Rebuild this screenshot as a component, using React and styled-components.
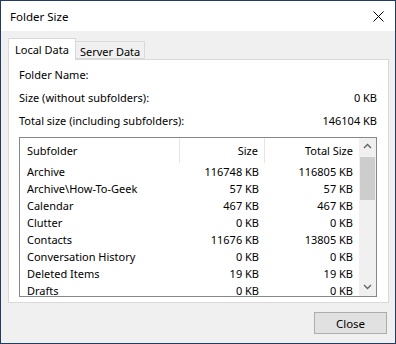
import React from 'react'
import styled, { createGlobalStyle } from 'styled-components'

const GlobalStyle = createGlobalStyle`
  html, body {
    margin: 0;
    padding: 0;
    width: 396px;
    height: 344px;
    overflow: hidden;
    background: #f0f0f0;
  }
  * { box-sizing: border-box; }
`

const Window = styled.div`
  width: 396px;
  height: 344px;
  border: 1px solid #1f3d62;
  background: #f0f0f0;
  display: flex;
  flex-direction: column;
  font-family: "Segoe UI", "Noto Sans", sans-serif;
  font-size: 11px;
  color: #000;
`

const TitleBar = styled.div`
  height: 30px;
  background: #fff;
  display: flex;
  align-items: center;
  justify-content: space-between;
  padding: 0 11px 0 9px;
  font-size: 11.5px;
`

const CloseX = styled.svg`
  width: 11px;
  height: 11px;
`

const Body = styled.div`
  flex: 1;
  display: flex;
  flex-direction: column;
  padding: 7px 6px 0 7px;
`

const TabStrip = styled.div`
  display: flex;
  align-items: flex-end;
  height: 21px;
  position: relative;
  z-index: 1;
`

const Tab = styled.div`
  height: ${p => (p.$active ? '22px' : '18px')};
  margin-bottom: ${p => (p.$active ? '-1px' : '0')};
  padding: 0 ${p => (p.$active ? '6px' : '4px')};
  background: ${p => (p.$active ? '#fff' : '#f0f0f0')};
  border: 1px solid #d9d9d9;
  border-bottom: ${p => (p.$active ? 'none' : '1px solid #d9d9d9')};
  border-left: ${p => (p.$active ? '1px solid #d9d9d9' : 'none')};
  display: flex;
  align-items: center;
  padding-top: ${p => (p.$active ? '0' : '2px')};
  line-height: 1;
`

const Panel = styled.div`
  height: 244px;
  background: #fff;
  border: 1px solid #d9d9d9;
  padding: 3px 11px 0 10px;
  display: flex;
  flex-direction: column;
`

const InfoRow = styled.div`
  display: flex;
  justify-content: space-between;
  height: 23.5px;
  align-items: center;
  &:nth-child(n + 2) {
    margin-top: -0.5px;
  }
`

const ListBox = styled.div`
  margin-top: 4px;
  height: 160px;
  border: 1px solid #828790;
  display: flex;
  overflow: hidden;
`

const Table = styled.div`
  width: 339px;
  display: flex;
  flex-direction: column;
`

const Row = styled.div`
  display: grid;
  grid-template-columns: 160px 85px 94px;
  height: ${p => (p.$header ? '25px' : '17px')};
  flex-shrink: 0;
  align-items: center;
`

const Cell = styled.div`
  height: 100%;
  display: flex;
  align-items: center;
  justify-content: ${p => (p.$right ? 'flex-end' : 'flex-start')};
  padding: ${p => (p.$right ? '0 6px 0 0' : '0 0 0 7px')};
  border-right: ${p => (p.$sep ? '1px solid #e5e5e5' : 'none')};
  white-space: nowrap;
`

const ScrollBar = styled.div`
  width: 17px;
  background: #f0f0f0;
  display: flex;
  flex-direction: column;
`

const ArrowButton = styled.div`
  height: 17px;
  display: flex;
  align-items: center;
  justify-content: center;
  flex-shrink: 0;
`

const Track = styled.div`
  flex: 1;
  padding: 2px 1px;
`

const Thumb = styled.div`
  height: 43px;
  background: #cdcdcd;
`

const Footer = styled.div`
  flex: 1;
  display: flex;
  justify-content: flex-end;
  align-items: flex-start;
  padding: 9px 2px 0 0;
`

const Button = styled.button`
  width: 73px;
  height: 22px;
  background: #e1e1e1;
  border: 1px solid #adadad;
  font-family: inherit;
  font-size: 11.5px;
  color: #000;
  padding: 0;
`

const Chevron = ({ up }) => (
  <svg width="9" height="6" viewBox="0 0 9 6">
    <path
      d={up ? 'M1 5 L4.5 1.5 L8 5' : 'M1 1 L4.5 4.5 L8 1'}
      fill="none"
      stroke="#606060"
      strokeWidth="1.3"
    />
  </svg>
)

const rows = [
  ['Archive', '116748 KB', '116805 KB'],
  ['Archive\\How-To-Geek', '57 KB', '57 KB'],
  ['Calendar', '467 KB', '467 KB'],
  ['Clutter', '0 KB', '0 KB'],
  ['Contacts', '11676 KB', '13805 KB'],
  ['Conversation History', '0 KB', '0 KB'],
  ['Deleted Items', '19 KB', '19 KB'],
  ['Drafts', '0 KB', '0 KB'],
]

export default function App() {
  return (
    <Window>
      <GlobalStyle />
      <TitleBar>
        <span>Folder Size</span>
        <CloseX viewBox="0 0 11 11">
          <path d="M0.5 0.5 L10.5 10.5 M10.5 0.5 L0.5 10.5" stroke="#000" strokeWidth="1" />
        </CloseX>
      </TitleBar>
      <Body>
        <TabStrip>
          <Tab $active>Local Data</Tab>
          <Tab>Server Data</Tab>
        </TabStrip>
        <Panel>
          <InfoRow>
            <span>Folder Name:</span>
          </InfoRow>
          <InfoRow>
            <span>Size (without subfolders):</span>
            <span>0 KB</span>
          </InfoRow>
          <InfoRow>
            <span>Total size (including subfolders):</span>
            <span>146104 KB</span>
          </InfoRow>
          <ListBox>
            <Table>
              <Row $header>
                <Cell $sep>Subfolder</Cell>
                <Cell $sep $right>Size</Cell>
                <Cell $right>Total Size</Cell>
              </Row>
              {rows.map(r => (
                <Row key={r[0]}>
                  <Cell>{r[0]}</Cell>
                  <Cell $right>{r[1]}</Cell>
                  <Cell $right>{r[2]}</Cell>
                </Row>
              ))}
            </Table>
            <ScrollBar>
              <ArrowButton><Chevron up /></ArrowButton>
              <Track><Thumb /></Track>
              <ArrowButton><Chevron /></ArrowButton>
            </ScrollBar>
          </ListBox>
        </Panel>
        <Footer>
          <Button>Close</Button>
        </Footer>
      </Body>
    </Window>
  )
}
